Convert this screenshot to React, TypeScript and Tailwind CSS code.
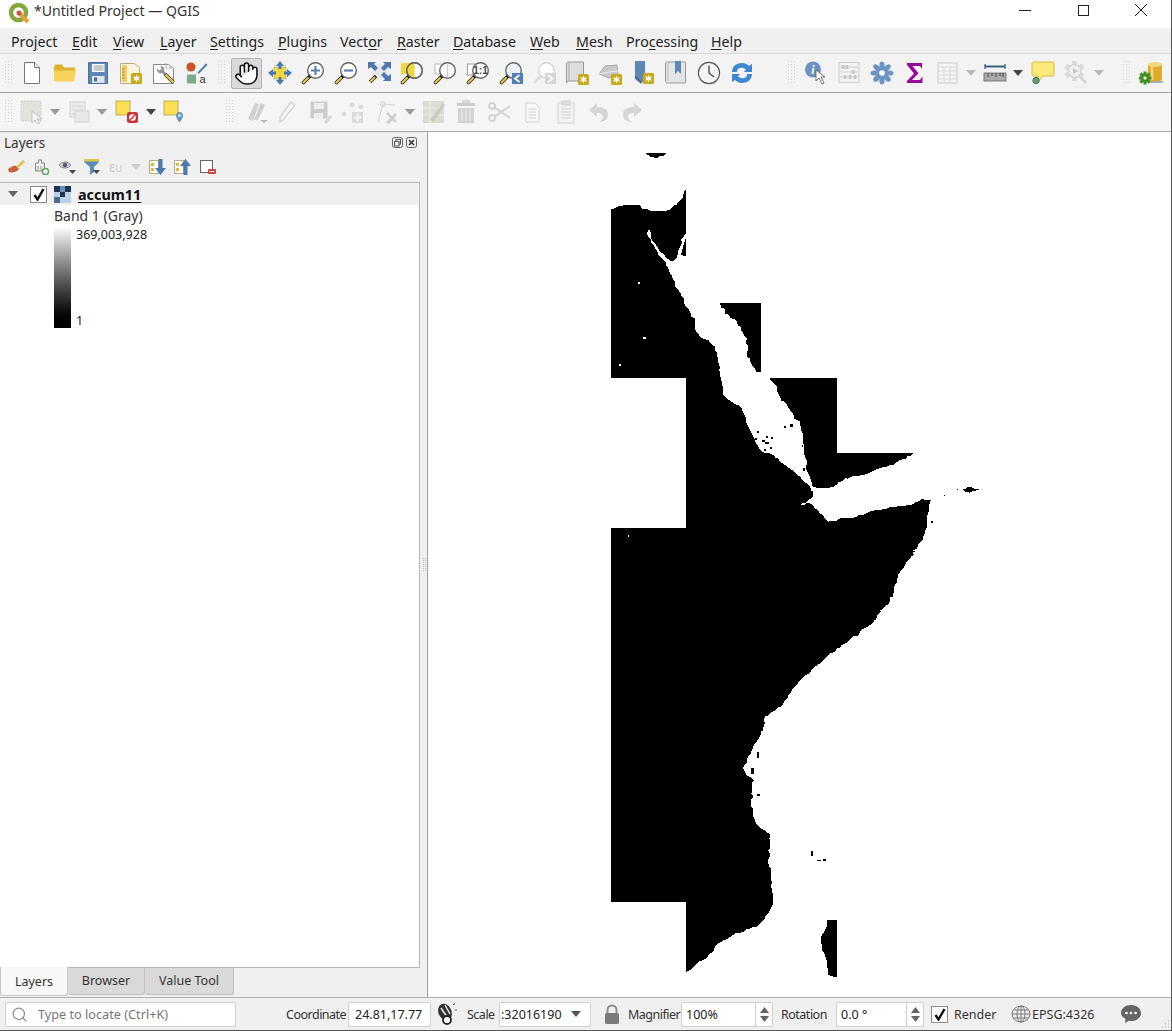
import React from "react";
import { Search, Hand } from "lucide-react";

type P = { children?: React.ReactNode; s?: number };
const I = ({ children, s = 24 }: P) => (
  <svg width={s} height={s} viewBox="0 0 24 24" className="block shrink-0">{children}</svg>
);
const Star = ({ x = 12, y = 12 }: { x?: number; y?: number }) => (
  <g transform={`translate(${x} ${y})`}>
    <rect x="0" y="0" width="11" height="11" rx="1.5" fill="#c9a81a" />
    <path d="M5.5 1.5l1 2.4 2.6-.7-1.6 2.3 1.6 2.3-2.6-.7-1 2.4-1-2.4-2.6.7 1.6-2.3-1.6-2.3 2.6.7z" fill="#fff" />
  </g>
);
const Handle = ({ c = "#e5c84a" }: { c?: string }) => (
  <g>
    <path d="M8.5 15.5L2.5 21.5" stroke="#222" strokeWidth="3.6" strokeLinecap="round" />
    <path d="M7 17L2.5 21.5" stroke={c} strokeWidth="2.2" strokeLinecap="round" />
    <circle cx="9" cy="15" r="1.6" fill="#111" />
  </g>
);
const Lens = ({ fill = "#fff", o = "#666" }: { fill?: string; o?: string }) => (
  <circle cx="14.5" cy="9.5" r="7.8" fill={fill} stroke={o} strokeWidth="1.4" />
);
const Caret = ({ c = "#777" }: { c?: string }) => (
  <svg width="12" height="6" viewBox="0 0 12 6" className="block"><path d="M1 0h10L6 6z" fill={c} /></svg>
);
const Grip = () => (
  <svg width="9" height="24" className="block">
    <defs>
      <pattern id="gripdots" width="3" height="3" patternUnits="userSpaceOnUse">
        <rect width="1" height="1" fill="#d2d2d2" />
      </pattern>
    </defs>
    <rect width="9" height="24" fill="url(#gripdots)" />
  </svg>
);

const NewDoc = () => <I><path d="M4.5 1.5h10l5 5v16h-15z" fill="#fff" stroke="#777" /><path d="M14.5 1.5v5h5" fill="#eee" stroke="#777" /></I>;
const OpenF = () => <I><path d="M1 7l1-3.5h7l2 3h11v4H1z" fill="#e0b12e" /><path d="M1 9.5h22l-2 11H1z" fill="#f7d35c" /></I>;
const Save = () => <I><path d="M2.5 1.5h19v21h-19z" fill="#5f87b4" stroke="#4c6f97" /><rect x="6" y="3" width="12.5" height="8" fill="#fff" /><path d="M7.5 5h10M7.5 7h10M7.5 9h10" stroke="#778" strokeWidth=".8" /><rect x="6" y="15" width="12.5" height="7" fill="#dfe4ea" /><rect x="8" y="16.5" width="3" height="4" fill="#4c6f97" /></I>;
const NewLayout = () => <I><path d="M1.5 2.5h14l5 4v16h-19z" fill="#fbf5dd" stroke="#b9ad80" /><rect x="3" y="4" width="5" height="17" fill="#efd05c" /><path d="M3 8h2.5M3 11h2.5M3 14h2.5M3 17h2.5" stroke="#9a8433" /><Star x={12} y={12} /></I>;
const Manager = () => <I><path d="M1.500 3.500h15l5 4v15h-20z" fill="#fff" stroke="#888" /><path d="M14 2v5h6" fill="none" stroke="#aaa" /><path d="M5 8.500a3.500 3.500 0 005 3.500l2 2 2-2-2-2a3.500 3.500 0 00-3.500-5L9.500 8 7 9.500 5.500 7z" fill="#8f959a" /><path d="M13 13l8.500 8.500" stroke="#333" strokeWidth="3.800" /><path d="M13.500 13.500l8 8" stroke="#e0c850" strokeWidth="2.400" /></I>;
const StyleI = () => <I><circle cx="6" cy="6" r="4.6" fill="#c8562a" /><path d="M12.5 11.5L21 2.5l1.5 1.2-8.5 9z" fill="#4e79a8" /><rect x="2" y="13.5" width="9" height="9" fill="#7bab8f" /><text x="14.5" y="22" fontSize="11" fill="#333" fontFamily="Liberation Sans">a</text></I>;
const PanSel = () => <I><rect x="6" y="6" width="12" height="12" fill="#efd93c" stroke="#999" strokeWidth=".5" /><path d="M12 0l4 5h-2.5v3h-3V5H8zM12 24l4-5h-2.5v-3h-3v3H8zM0 12l5-4v2.5h3v3H5V16zM24 12l-5-4v2.5h-3v3h3V16z" fill="#4d79ac" /></I>;
const ZoomIn = () => <I><Handle /><Lens /><path d="M14.5 5v9M10 9.5h9" stroke="#5a82b0" strokeWidth="2.2" /></I>;
const ZoomOut = () => <I><Handle /><Lens /><path d="M10 9.5h9" stroke="#5a82b0" strokeWidth="2.2" /></I>;
const ZoomFull = () => <I><rect x="5" y="3" width="16" height="15" fill="#e8e8e8" /><path d="M1 1h8L7 3l4 4-3 3-4-4-3 2zM24 1h-8l2 2-4 4 3 3 4-4 3 2zM24 20h-8l2-2-4-4 3-3 4 4 3-2z" fill="#4d79ac" /><path d="M9 15l-6 6" stroke="#222" strokeWidth="3.4" /><path d="M8 16l-5 5" stroke="#e5c84a" strokeWidth="2" /></I>;
const ZoomSel = () => <I><rect x="1" y="2" width="9" height="11" fill="#efd93c" /><Handle /><Lens /><path d="M14.5 2.300a7.200 7.200 0 000 14.400z" fill="#efd93c" /><circle cx="14.5" cy="9.5" r="7.8" fill="none" stroke="#666" strokeWidth="1.4" /></I>;
const ZoomLay = () => <I><rect x="2" y="3" width="7" height="10" fill="#fff" stroke="#aaa" strokeWidth=".8" /><Handle /><Lens /><path d="M14.5 2.300v14.400" stroke="#ccc" strokeWidth="1.4" /></I>;
const Zoom11 = () => <I><rect x="1.5" y="3" width="8" height="11" fill="#fff" stroke="#888" strokeWidth=".8" /><Handle /><Lens /><text x="14.5" y="13" textAnchor="middle" fontSize="10" fontWeight="700" fill="#444" fontFamily="Liberation Sans">1:1</text></I>;
const ZoomLast = () => <I><Handle /><Lens fill="#eef1f5" /><rect x="13" y="12" width="11" height="11" fill="#527fb0" /><path d="M20.5 14l-4.5 3.5 4.5 3.5" fill="none" stroke="#fff" strokeWidth="1.8" /></I>;
const ZoomNext = () => <I><path d="M8.5 15.5L2.5 21.5" stroke="#ddd" strokeWidth="3" /><Lens o="#d5d5d5" /><rect x="13" y="12" width="11" height="11" fill="#d5d5d5" /><path d="M16 14l4.5 3.5L16 21" fill="none" stroke="#fff" strokeWidth="1.8" /></I>;
const NewMap = () => <I><path d="M1.5 3c0-1.5 1-2 2-2h15v19H3.5c-1 0-2 .5-2 2z" fill="#ddd" stroke="#999" /><path d="M4 1v19" stroke="#aaa" /><Star x={13} y={13} /></I>;
const New3d = () => <I><path d="M1 13l6-8 12-1 1 11-9 2z" fill="#c8c8c8" stroke="#aaa" /><path d="M1 13l10-2 9-1" stroke="#eee" fill="none" /><Star x={13} y={13} /></I>;
const NewBook = () => <I><path d="M4 0h10v18l-4 5-6-5z" fill="#5f87b4" /><path d="M4 15l6 6" stroke="#33475f" strokeWidth="1" /><Star x={12} y={12} /></I>;
const Books = () => <I><path d="M1.5 3c0-1.5 1-2 2-2h18v21H3.5c-1 0-2-.5-2-2z" fill="#e4e4e4" stroke="#999" /><path d="M4 1v19" stroke="#bbb" /><path d="M11 0h6v13l-3-3-3 3z" fill="#5f87b4" /></I>;
const Clock = () => <I><circle cx="12" cy="12" r="10.6" fill="#f4f4f4" stroke="#555" strokeWidth="1.1" /><path d="M12 4.5V12l5 4" stroke="#444" strokeWidth="1.3" fill="none" /></I>;
const Refresh = () => <I><path d="M2 11C2 5 7 2 12 2c3 0 5 1 7 3l3-2v8h-8l2-2.5C14 7 12 6.500 10 7c-2.500.5-3 2-3 4z" fill="#3f88cf" /><path d="M22 13c0 6-5 9-10 9-3 0-5-1-7-3l-3 2v-8h8l-2 2.500c2 1.500 4 2 6 1.500 2.500-.5 3-2 3-4z" fill="#3f88cf" /></I>;
const Identify = () => <I><circle cx="9" cy="8.500" r="8" fill="#6d92c0" /><text x="9" y="13" textAnchor="middle" fontSize="12" fontWeight="700" fontStyle="italic" fill="#fff" fontFamily="Liberation Serif">i</text><path d="M12 9l0 11 3-3 3 6 2-1-3-6h4z" fill="#fff" stroke="#555" strokeWidth=".8" /></I>;
const Abacus = () => <I><rect x="2" y="1.500" width="20" height="20" fill="#f2f2f2" stroke="#ccc" /><path d="M3 6h18M3 11h18M3 16h18" stroke="#ccc" /><path d="M6 4v4M10 4v4M16 9v4M8 14v4M13 14v4M18 14v4" stroke="#c5c5c5" strokeWidth="2.600" /></I>;
const Gear = () => <I><g fill="#6e94c4">{[0, 45, 90, 135, 180, 225, 270, 315].map((a) => <ellipse key={a} cx="12" cy="4.500" rx="2.600" ry="4" transform={`rotate(${a} 12 12)`} />)}<circle cx="12" cy="12" r="6.500" /></g><circle cx="12" cy="12" r="2.800" fill="#fff" /></I>;
const Sigma = () => <I><path d="M4 2h15v6l-2-3H9.500l6 7.200-6.500 6.800h8l2.500-3.500v6.500H4v-2l7-7.500L4 4z" fill="#970a96" /></I>;
const TableI = () => <I><rect x="2" y="2" width="19" height="20" fill="#f4f4f4" stroke="#ccc" /><path d="M2 6h19M2 10h19M2 14h19M2 18h19M8 6v16M14 6v16" stroke="#d8d8d8" /></I>;
const Ruler = () => <I><path d="M2 5.500h20" stroke="#3c5f85" strokeWidth="2" /><path d="M2 3v5M22 3v5" stroke="#3c5f85" strokeWidth="1.300" /><rect x="1" y="12" width="22" height="8" fill="#aaa" stroke="#666" strokeWidth=".8" /><path d="M5 12v4M9 12v3M13 12v4M17 12v3M20 12v4" stroke="#444" /></I>;
const TipI = () => <I><path d="M2.500 1h19a1.500 1.500 0 011.500 1.500v11a1.500 1.500 0 01-1.500 1.500H12l-5 6V15H2.500A1.500 1.500 0 011 13.500v-11A1.500 1.500 0 012.500 1z" fill="#fbe97a" stroke="#d5be45" /><circle cx="5" cy="19.500" r="3.200" fill="#6d9c78" stroke="#4b7356" /></I>;
const SearchG = () => <I><g fill="#dcdcdc">{[0, 60, 120, 180, 240, 300].map((a) => <rect key={a} x="8" y="0" width="5" height="20" transform={`rotate(${a} 10.500 10)`} />)}</g><circle cx="10.500" cy="10" r="6.500" fill="#eee" stroke="#ccc" /><path d="M9 7l5 3-5 3z" fill="#c8c8c8" /><path d="M15 15l7 7" stroke="#d5d5d5" strokeWidth="2.500" /></I>;
const Db = () => <I><path d="M9 3.500C9 1 23 1 23 3.500v15c0 2.500-14 2.500-14 0z" fill="#e0ab2c" /><ellipse cx="16" cy="3.500" rx="7" ry="2.300" fill="#f6d77a" /><path d="M13 3v16" stroke="#f4d684" strokeWidth="2.500" /><path d="M9 21h15" stroke="#999" strokeWidth="1.500" /><g fill="#3f8f22">{[0, 45, 90, 135].map((a) => <rect key={a} x="4.500" y="10.500" width="3" height="13" transform={`rotate(${a} 6 17)`} />)}<circle cx="6" cy="17" r="4.500" /></g><circle cx="6" cy="17" r="1.700" fill="#dff0d0" /></I>;

const d = "#d2d2d2";
const SelectD = () => <I><rect x="1" y="1" width="20" height="20" fill="#e2e2dc" stroke="#cfcfc8" strokeDasharray="2 1" /><path d="M12 11v12l3-3 3 4 2-1-3-4h5z" fill="#f6f6f6" stroke="#bbb" strokeWidth=".8" /></I>;
const AttrD = () => <I><rect x="3" y="2" width="15" height="15" fill="#ececec" stroke={d} /><path d="M5 6h11M5 10h11M5 14h11" stroke={d} /><rect x="8" y="11" width="14" height="11" fill="#e8e8e8" stroke={d} /></I>;
const Deselect = () => <I><rect x="1" y="1" width="14" height="14" fill="#fbdf53" stroke="#a89a40" strokeWidth=".7" /><rect x="12" y="12" width="11" height="11" rx="2" fill="#c5373b" /><circle cx="17.500" cy="17.500" r="3.300" fill="#fff" /><path d="M15.300 19.700l4.400-4.400" stroke="#c5373b" strokeWidth="1.500" /></I>;
const SelLoc = () => <I><rect x="1" y="1" width="14" height="14" fill="#fbdf53" stroke="#a89a40" strokeWidth=".7" /><path d="M16.500 12a3.500 3.500 0 013.500 3.500c0 2.500-3.500 7-3.500 7s-3.500-4.500-3.500-7a3.500 3.500 0 013.500-3.500z" fill="#6a93b5" /><circle cx="16.500" cy="15.500" r="1.300" fill="#fff" /></I>;
const PenD = () => <I><path d="M3 19L10 3l4 1-6 17zM9 20L16 3l4 2-7 15z" fill="#d0d0d0" /><path d="M15 20h8l-4 3z" fill="#bbb" /></I>;
const Pen2 = () => <I><path d="M5 22l0-5L16 2l4 3L8 20z" fill="#f6f6f6" stroke={d} strokeWidth="1.300" /></I>;
const SaveD = () => <I><path d="M2.500 1.500h17v17h-17z" fill="#ccc" /><rect x="6" y="3" width="10" height="6" fill="#eee" /><rect x="6" y="13" width="9" height="6" fill="#eee" /><path d="M16 22l6-7 2 2-6 7z" fill="#d5d5d5" /></I>;
const Nodes = () => <I><circle cx="3" cy="14" r="2.300" fill="#d8d8d8" /><circle cx="11" cy="5" r="2.300" fill="#d8d8d8" /><circle cx="20" cy="7" r="2.300" fill="#d8d8d8" /><rect x="11" y="12" width="11" height="11" fill="#ddd" /><path d="M16.500 14v7M13 17.500h7" stroke="#fff" strokeWidth="1.500" /></I>;
const VertexD = () => <I><path d="M3 22L8 4l12 1" fill="none" stroke={d} /><circle cx="8" cy="4" r="2.500" fill="none" stroke={d} /><path d="M11 22l9-9 2 2-8 9z" fill="#cfcfcf" /><path d="M12 13l9 9" stroke="#cfcfcf" strokeWidth="2.500" /></I>;
const EditT = () => <I><rect x="1" y="1" width="21" height="22" fill="#dcdcd4" /><path d="M1 8h21M1 15h21M8 1v22" stroke="#eee" /><path d="M8 20L21 3l2 2-11 17z" fill="#c9c9c0" /></I>;
const Trash = () => <I><rect x="2" y="3" width="18" height="3" fill="#ccc" /><rect x="7" y="0" width="8" height="3" fill="#d8d8d8" /><path d="M3 8h16v15H3z" fill="#d2d2d2" /><path d="M7 10v11M11 10v11M15 10v11" stroke="#eee" /></I>;
const Cut = () => <I><circle cx="4" cy="6" r="3" fill="none" stroke={d} strokeWidth="1.800" /><circle cx="4" cy="18" r="3" fill="none" stroke={d} strokeWidth="1.800" /><path d="M6.500 7.500L22 18M6.500 16.500L22 6" stroke={d} strokeWidth="2" /></I>;
const Copy = () => <I><path d="M5 3h9l4 4v15H5z" fill="#f8f8f8" stroke={d} /><path d="M8 9h7M8 12h7M8 15h7M8 18h7" stroke={d} /></I>;
const Paste = () => <I><rect x="4" y="3" width="16" height="20" fill="#f2f2f2" stroke={d} /><rect x="8" y="1" width="8" height="4" fill="#e0e0e0" stroke={d} /><path d="M7 9h10M7 12h10M7 15h10M7 18h10" stroke={d} /></I>;
const Undo = () => <I><path d="M10 3L2 10l8 7v-4c4 0 6 1 6 4 0 2-2 4-4 5 5 0 9-2 9-8 0-5-5-7-11-7z" fill="#d5d5d5" /></I>;
const Redo = () => <I><path d="M14 3l8 7-8 7v-4c-4 0-6 1-6 4 0 2 2 4 4 5-5 0-9-2-9-8 0-5 5-7 11-7z" fill="#d5d5d5" /></I>;

const Cell = ({ children, w = "w-[33px]" }: { children: React.ReactNode; w?: string }) => (
  <div className={`${w} h-[38px] flex items-center justify-center shrink-0`}>{children}</div>
);
const Mn = ({ a, u, b, w }: { a?: string; u: string; b: string; w: string }) => (
  <span className={`${w} shrink-0 whitespace-nowrap`}>{a}<span className="underline underline-offset-2">{u}</span>{b}</span>
);

const toPts = (list: number[], ox: number, oy: number) => {
  const out: number[][] = [];
  for (let i = 0; i < list.length; i += 2) out.push([ox + list[i] / 3, oy + list[i + 1] / 3]);
  return out;
};
let seed = 7;
const rnd = () => {
  seed = (seed * 9301 + 49297) % 233280;
  return seed / 233280;
};
const snap = (v: number) => Math.round(v / 1.5) * 1.5;
const rough = (list: number[][]) => {
  const out: string[] = [];
  list.forEach((a, i) => {
    const b = list[(i + 1) % list.length];
    out.push(`${a[0]},${a[1]}`);
    const dx = b[0] - a[0];
    const dy = b[1] - a[1];
    if (Math.abs(dx) < 1 || Math.abs(dy) < 1) return;
    const n = Math.floor(Math.hypot(dx, dy) / 3);
    for (let k = 1; k < n; k++) {
      const t = k / n;
      out.push(`${snap(a[0] + dx * t + (rnd() - 0.5) * 2)},${snap(a[1] + dy * t + (rnd() - 0.5) * 2)}`);
    }
  });
  return out.join(" ");
};
const mainA = [33,208,60,198,80,194,120,196,150,212,175,214,200,212,230,195,250,165,257,138,257,280,250,292,240,320,230,352,215,364,200,355,175,325,158,305,150,270,143,268,142,282,155,310,190,360,205,385,220,420,245,470,270,515,285,535,285,565,300,590,325,600,345,620,355,660,365,730,370,765,395,785,425,805,445,860,465,900,480,930,520,945,555,975,600,1010,630,1040,640,1068,600,1095,630,1090,660,1120,685,1145,720,1135,770,1130,820,1112,880,1102,930,1095,965,1075,992,1080,985,1120,975,1180,950,1225,925,1260];
const mainB = [965,0,925,60,895,110,880,160,850,205,810,255,750,300,690,340,640,385,585,440,550,490,495,530,490,570,460,620,445,650,430,685,440,705,462,720,455,745,460,770,452,790,465,840,480,865,510,885,505,960,512,1000,515,1045,520,1070,505,1120,470,1160,400,1185,355,1210,320,1255,290,1270,258,1298,258,1085,33,1085];
const mainPts = rough([
  ...toPts(mainA, 600, 140),
  ...toPts(mainB, 600, 540),
  [611, 528], [686, 528], [686, 378], [611, 378],
]);
const blockB1 = rough(toPts([360,490,483,490,483,697,470,697,460,680,440,650,445,625,435,590,410,545,375,520], 600, 140));
const blockB2 = rough(toPts([510,714,711,714,711,938,950,938,900,960,880,975,830,988,790,1005,735,1015,700,1040,665,1045,640,1040,625,1000,615,950,608,900,600,855,570,810,540,770,525,735], 600, 140));
const top = rough(toPts([138,40,200,40,190,48,170,55,150,50], 600, 140));
const isl = rough(toPts([1088,1048,1105,1040,1140,1048,1110,1058,1095,1056], 600, 140));
const mad = rough(toPts([682,1140,711,1140,711,1310,685,1305,680,1260,665,1220,663,1190,680,1160], 600, 540));
const sliver = toPts([257,295,250,318,243,345,257,348], 600, 140).map((p) => p.join(",")).join(" ");
const specksBlack = [[790,424,3,3],[784,426,2,2],[762,440,3,2],[755,438,2,2],[765,442,4,2],[757,431,2,2],[766,436,2,2],[771,437,2,2],[803,442,2,2],[802,445,1,2],[756,446,2,2],[764,449,2,2],[770,447,2,2],[803,468,2,3],[957,489,1,1],[944,495,1,1],[931,521,2,2],[811,851,2,5],[817,860,4,1],[823,859,3,2],[757,752,2,6],[751,768,3,6],[757,794,3,2]];
const specksWhite = [[638,282,2,2],[643,337,3,2],[619,364,2,2],[628,535,1,2],[746,366,2,2],[935,497,1,1]];

const Lbl = ({ w, t }: { w: string; t: string }) => (
  <div className={`${w} pt-[2px] whitespace-nowrap shrink-0 text-[12.5px] tracking-[-0.5px] text-[#333]`}>{t}</div>
);
const Spin = ({ w, t }: { w: string; t: string }) => (
  <div className={`${w} h-[25px] shrink-0 bg-white border border-[#cfcfcf] rounded-[2px] flex items-center text-[12.5px] text-[#222]`}>
    <span className="flex-1 pl-[4px] pt-[2px]">{t}</span>
    <div className="w-[17px] h-full border-l border-[#cfcfcf] flex flex-col items-center justify-center gap-[3px]">
      <svg width="9" height="6" className="block"><path d="M0 6L4.500 0 9 6z" fill="#666" /></svg>
      <svg width="9" height="6" className="block"><path d="M0 0L4.500 6 9 0z" fill="#666" /></svg>
    </div>
  </div>
);
const CheckBox = ({ size, cls = "" }: { size: string; cls?: string }) => (
  <div className={`${size} shrink-0 bg-white border border-[#8c8c8c] flex items-center justify-center ${cls}`}>
    <svg width="12" height="13" viewBox="0 0 12 13" className="block"><path d="M1.500 7l3 4.500L10.500 1" fill="none" stroke="#111" strokeWidth="2.400" /></svg>
  </div>
);

export default function App() {
  return (
    <div className="w-[1172px] h-[1031px] flex flex-col overflow-hidden bg-[#f0f0f0] border-r border-b border-[#555] font-['Noto_Sans',sans-serif] text-[#222]">
      {/* title */}
      <div className="h-[28px] shrink-0 bg-white flex items-start">
        <svg width="22" height="22" viewBox="0 0 22 22" className="ml-[8px] mt-[2px] block shrink-0">
          <circle cx="10.500" cy="10.500" r="7.500" fill="none" stroke="#83a83c" strokeWidth="4.500" />
          <path d="M11 11l9 9" stroke="#dfa43c" strokeWidth="4" />
          <circle cx="11" cy="11" r="2.500" fill="#c9563a" />
        </svg>
        <div className="ml-[4px] mt-[1px] text-[14.1px] leading-[20px] text-[#333]">*Untitled Project — QGIS</div>
        <div className="ml-auto mr-[1px] flex">
          <div className="w-[58px] h-[20px] flex items-center justify-center"><div className="w-[12px] h-px bg-[#222]" /></div>
          <div className="w-[58px] h-[20px] flex items-center justify-center"><div className="w-[11px] h-[11px] border border-[#222]" /></div>
          <div className="w-[58px] h-[20px] flex items-center justify-center">
            <svg width="12" height="12" className="block"><path d="M0 0l12 12M12 0L0 12" stroke="#222" /></svg>
          </div>
        </div>
      </div>
      {/* menu */}
      <div className="h-[26px] shrink-0 bg-[#f0f0f0] border-b border-[#d8d8d8] pl-[11px] flex items-center text-[14.2px] leading-[20px] pt-[3px]">
        <Mn a="Pro" u="j" b="ect" w="w-[61px]" />
        <Mn u="E" b="dit" w="w-[41px]" />
        <Mn u="V" b="iew" w="w-[47px]" />
        <Mn u="L" b="ayer" w="w-[50px]" />
        <Mn u="S" b="ettings" w="w-[68px]" />
        <Mn u="P" b="lugins" w="w-[62px]" />
        <Mn a="Vect" u="o" b="r" w="w-[57px]" />
        <Mn u="R" b="aster" w="w-[56px]" />
        <Mn u="D" b="atabase" w="w-[77px]" />
        <Mn u="W" b="eb" w="w-[46px]" />
        <Mn u="M" b="esh" w="w-[50px]" />
        <Mn a="Pro" u="c" b="essing" w="w-[85px]" />
        <Mn u="H" b="elp" w="w-[40px]" />
      </div>
      {/* toolbar 1 */}
      <div className="h-[39px] shrink-0 bg-[#f3f3f3] border-b border-[#a9a9a9] flex items-center">
        <div className="w-[15px] pl-[5px] shrink-0"><Grip /></div>
        <Cell><NewDoc /></Cell><Cell><OpenF /></Cell><Cell><Save /></Cell><Cell><NewLayout /></Cell><Cell><Manager /></Cell><Cell><StyleI /></Cell>
        <div className="w-[17px] shrink-0 pl-[5px]"><Grip /></div>
        <Cell>
          <div className="w-[31px] h-[31px] bg-[#d9d9d9] border border-[#b4b4b4] rounded-[2px] flex items-center justify-center">
            <Hand size={25} fill="#fff" stroke="#111" strokeWidth={1.5} />
          </div>
        </Cell>
        <Cell><PanSel /></Cell><Cell><ZoomIn /></Cell><Cell><ZoomOut /></Cell><Cell><ZoomFull /></Cell><Cell><ZoomSel /></Cell><Cell><ZoomLay /></Cell><Cell><Zoom11 /></Cell><Cell><ZoomLast /></Cell><Cell><ZoomNext /></Cell><Cell><NewMap /></Cell><Cell><New3d /></Cell><Cell><NewBook /></Cell><Cell><Books /></Cell><Cell><Clock /></Cell><Cell><Refresh /></Cell>
        <div className="w-[41px] shrink-0 flex justify-end pr-[2px]"><Grip /></div>
        <Cell><Identify /></Cell><Cell><Abacus /></Cell><Cell><Gear /></Cell><Cell><Sigma /></Cell><Cell><TableI /></Cell>
        <Cell w="w-[14px]"><Caret c="#bbb" /></Cell>
        <Cell><Ruler /></Cell>
        <Cell w="w-[14px]"><Caret c="#444" /></Cell>
        <div className="w-[1px] shrink-0" />
        <Cell><TipI /></Cell>
        <Cell><SearchG /></Cell>
        <Cell w="w-[14px]"><Caret c="#bbb" /></Cell>
        <div className="w-[28px] shrink-0 flex justify-end pr-[2px]"><Grip /></div>
        <Cell><Db /></Cell>
      </div>
      {/* toolbar 2 */}
      <div className="h-[39px] shrink-0 bg-[#f5f5f5] border-b border-[#a9a9a9] flex items-center">
        <div className="w-[15px] pl-[5px] shrink-0"><Grip /></div>
        <Cell><SelectD /></Cell>
        <Cell w="w-[14px]"><Caret c="#999" /></Cell>
        <Cell><AttrD /></Cell>
        <Cell w="w-[14px]"><Caret c="#999" /></Cell>
        <div className="w-[1px] shrink-0" />
        <Cell><Deselect /></Cell>
        <div className="w-[1px] shrink-0" />
        <Cell w="w-[14px]"><Caret c="#444" /></Cell>
        <Cell><SelLoc /></Cell>
        <div className="w-[49px] shrink-0 flex justify-end pr-[5px]"><Grip /></div>
        <Cell><PenD /></Cell>
        <div className="-ml-[3px]"><Cell><Pen2 /></Cell></div>
        <Cell><SaveD /></Cell><Cell><Nodes /></Cell>
        <div className="ml-[1px]"><Cell><VertexD /></Cell></div>
        <Cell w="w-[14px]"><Caret c="#999" /></Cell>
        <Cell><EditT /></Cell><Cell><Trash /></Cell><Cell><Cut /></Cell><Cell><Copy /></Cell><Cell><Paste /></Cell><Cell><Undo /></Cell><Cell><Redo /></Cell>
      </div>
      {/* main */}
      <div className="flex-1 min-h-0 flex">
        <div className="w-[420px] shrink-0 flex flex-col">
          <div className="h-[21px] shrink-0 flex items-center pl-[4px] pr-[2px]">
            <span className="text-[13.5px] text-[#333] leading-[20px]">Layers</span>
            <div className="ml-auto flex gap-[3px] mr-[1px]">
              <svg width="11" height="11" className="block"><rect x=".5" y=".5" width="10" height="10" rx="2" fill="none" stroke="#666" /><rect x="4" y="2.500" width="4.500" height="4.500" fill="none" stroke="#555" /><rect x="2.500" y="4.500" width="4.500" height="4.500" fill="#eee" stroke="#555" /></svg>
              <svg width="11" height="11" className="block"><rect x=".5" y=".5" width="10" height="10" rx="2" fill="none" stroke="#666" /><path d="M3 3l5 5M8 3L3 8" stroke="#333" strokeWidth="1.500" /></svg>
            </div>
          </div>
          <div className="h-[28px] shrink-0 flex items-center">
            <div className="w-[15px] ml-[7px] shrink-0"><svg width="18" height="16" viewBox="0 0 18 16" className="block"><path d="M9 8l7-7 2 2-7 6z" fill="#dcc24b" /><path d="M1 10c3-2 6-4 8-3l3 3c-2 3-7 4-10 3z" fill="#c9603a" /></svg></div>
            <div className="ml-[11px] w-[16px] shrink-0"><svg width="16" height="16" viewBox="0 0 16 16" className="block"><path d="M5.500 1h3v3h3v8h-9V4h3z" fill="#eee" stroke="#888" /><path d="M5 7v5M8 7v5" stroke="#999" /><circle cx="12.500" cy="12.500" r="3" fill="#fff" stroke="#5fa05f" strokeWidth="1.500" /></svg></div>
            <div className="ml-[9px] w-[18px] shrink-0"><svg width="18" height="16" viewBox="0 0 18 16" className="block"><path d="M1 6c3-4 9-4 12 0-3 4-9 4-12 0z" fill="#d0d0d0" stroke="#888" /><circle cx="7" cy="6" r="2.200" fill="#4c5e70" /><path d="M11 11h7l-3.500 4z" fill="#444" /></svg></div>
            <div className="ml-[7px] w-[18px] shrink-0"><svg width="18" height="18" viewBox="0 0 18 18" className="block"><path d="M1 1h15v3L11 9v5l-4 3V9L1 4z" fill="#5f8bb7" /><rect x="1" y="1" width="15" height="2.500" fill="#dcc64a" /><path d="M10 12h7l-3.500 4z" fill="#444" /></svg></div>
            <div className="ml-[8px] w-[18px] shrink-0 text-[#ccc] text-[14px] leading-none">ε<span className="text-[9px]">U</span></div>
            <div className="ml-[3px] w-[12px] shrink-0"><Caret c="#ccc" /></div>
            <div className="ml-[7px] w-[17px] shrink-0"><svg width="17" height="16" viewBox="0 0 17 16" className="block"><rect x=".5" y="1.500" width="9" height="13" fill="#fff" stroke="#b9ad80" /><rect x="2" y="4" width="3" height="3" fill="#e4b93c" /><rect x="2" y="9" width="3" height="3" fill="#e4b93c" /><path d="M9.500 0h4v9H17l-5.500 7L6 9h3.500z" fill="#4d79ac" /></svg></div>
            <div className="ml-[8px] w-[17px] shrink-0"><svg width="17" height="16" viewBox="0 0 17 16" className="block"><rect x=".5" y="1.500" width="9" height="13" fill="#fff" stroke="#b9ad80" /><rect x="2" y="4" width="3" height="3" fill="#e4b93c" /><rect x="2" y="9" width="3" height="3" fill="#e4b93c" /><path d="M9.500 16h4V7H17L11.500 0 6 7h3.500z" fill="#4d79ac" /></svg></div>
            <div className="ml-[8px] w-[17px] shrink-0"><svg width="17" height="16" viewBox="0 0 17 16" className="block"><rect x="1.500" y="1.500" width="12" height="12" fill="#fff" stroke="#666" /><rect x="9" y="10" width="8" height="5" rx="1" fill="#cc4444" /><rect x="10.500" y="12" width="5" height="1" fill="#fff" /></svg></div>
          </div>
          <div className="flex-1 min-h-0 bg-white border border-[#b8b8b8] border-l-0 ml-0 mt-[1px] flex flex-col">
            <div className="h-[22px] shrink-0 bg-[#f0f0f0] flex items-center">
              <div className="ml-[8px] w-[10px]"><svg width="10" height="6" className="block"><path d="M0 0h10L5 6z" fill="#666" /></svg></div>
              <CheckBox size="w-[17px] h-[17px]" cls="ml-[12px]" />
              <div className="ml-[7px] w-[17px] shrink-0">
                <svg width="17" height="17" viewBox="0 0 3 3" className="block" shapeRendering="crispEdges">
                  <rect width="3" height="3" fill="#bcd0e6" />
                  <rect x="0" y="0" width="1" height="1" fill="#1c3550" /><rect x="2" y="0" width="1" height="1" fill="#1c3550" /><rect x="1" y="1" width="1" height="1" fill="#1c3550" /><rect x="0" y="2" width="1" height="1" fill="#4a6b8f" /><rect x="1" y="0" width="1" height="1" fill="#6f90b3" />
                </svg>
              </div>
              <span className="ml-[7px] pt-[1px] text-[14.4px] font-bold underline underline-offset-2 text-[#111]">accum11</span>
            </div>
            <div className="ml-[54px] mt-[1px] text-[14px] leading-[20px] text-[#333]">Band 1 (Gray)</div>
            <div className="ml-[54px] flex h-[101px] mt-[1px]">
              <div className="w-[17px] h-full bg-gradient-to-b from-white to-black" />
              <div className="ml-[5px] pt-[1px] flex flex-col justify-between text-[12.5px] leading-[14px] text-[#222]">
                <span>369,003,928</span>
                <span>1</span>
              </div>
            </div>
          </div>
          <div className="h-[29px] shrink-0 flex items-start text-[12.5px] text-[#333]">
            <div className="w-[68px] h-[29px] -mt-px pt-[2px] bg-[#f8f8f8] border border-[#c8c8c8] border-t-0 rounded-b-[3px] flex items-center justify-center">Layers</div>
            <div className="w-[77px] h-[27px] pt-[1px] bg-[#d9d9d9] border-r border-b border-[#c0c0c0] rounded-b-[3px] flex items-center justify-center">Browser</div>
            <div className="w-[89px] h-[27px] pt-[1px] bg-[#d9d9d9] border-r border-b border-[#c0c0c0] rounded-b-[3px] flex items-center justify-center">Value Tool</div>
          </div>
        </div>
        <div className="w-[7px] shrink-0 flex items-center justify-end pr-[1px]">
          <svg width="3" height="14" className="block"><path d="M.5 0v14M2.500 0v14" stroke="#bbb" strokeDasharray="1 1" /></svg>
        </div>
        <div className="flex-1 min-w-0 bg-white border-l border-[#a0a0a0]">
          <svg viewBox="428 132 743 866" className="block w-[743px] h-[866px]" shapeRendering="crispEdges">
            <polygon points={mainPts} fill="#000" />
            <polygon points={blockB1} fill="#000" />
            <polygon points={blockB2} fill="#000" />
            <polygon points={top} fill="#000" />
            <polygon points={isl} fill="#000" />
            <polygon points={mad} fill="#000" />
            <polygon points={sliver} fill="#000" />
            {specksBlack.map((r, i) => <rect key={i} x={r[0]} y={r[1]} width={r[2]} height={r[3]} fill="#000" />)}
            {specksWhite.map((r, i) => <rect key={i} x={r[0]} y={r[1]} width={r[2]} height={r[3]} fill="#fff" />)}
          </svg>
        </div>
      </div>
      {/* status */}
      <div className="h-[33px] shrink-0 bg-[#f0f0f0] border-t border-[#b0b0b0] flex items-center">
        <div className="ml-[5px] w-[231px] h-[25px] shrink-0 bg-white border border-[#cfcfcf] rounded-[2px] flex items-center">
          <Search size={17} stroke="#888" strokeWidth={1.6} className="ml-[5px] shrink-0" />
          <span className="ml-[10px] pt-[2px] text-[12.7px] text-[#777]">Type to locate (Ctrl+K)</span>
        </div>
        <Lbl w="w-[60px] ml-[50px]" t="Coordinate" />
        <div className="ml-[2px] w-[83px] h-[25px] pt-[2px] shrink-0 bg-white border border-[#cfcfcf] rounded-[2px] flex items-center pl-[6px] text-[12.5px]">24.81,17.77</div>
        <svg width="22" height="24" viewBox="0 0 22 24" className="ml-[4px] block shrink-0">
          <ellipse cx="10" cy="10" rx="6.500" ry="8.500" fill="#333" transform="rotate(-25 10 10)" />
          <path d="M6 6l6 9M10 3l5 9" stroke="#eee" strokeWidth="1.500" />
          <circle cx="12" cy="18" r="4" fill="#fff" stroke="#222" strokeWidth="1.800" />
          <path d="M18 3l2-1.500M20 8h2" stroke="#555" />
        </svg>
        <Lbl w="w-[30px] ml-[10px]" t="Scale" />
        <div className="ml-[2px] w-[92px] h-[25px] shrink-0 bg-white border border-[#cfcfcf] rounded-[2px] flex items-center text-[12.5px]">
          <span className="flex-1 pl-[1px] pt-[2px]">:32016190</span>
          <div className="pr-[8px]"><Caret c="#555" /></div>
        </div>
        <svg width="16" height="20" viewBox="0 0 16 20" className="ml-[13px] block shrink-0"><path d="M3.500 9V6a4.500 4.500 0 019 0v3" fill="none" stroke="#8a8a8a" strokeWidth="2" /><rect x="1" y="9" width="14" height="11" rx="1.500" fill="#7a7a7a" /></svg>
        <Lbl w="w-[53px] ml-[8px]" t="Magnifier" />
        <Spin w="w-[92px]" t="100%" />
        <Lbl w="w-[47px] ml-[8px]" t="Rotation" />
        <div className="ml-[8px]"><Spin w="w-[88px]" t="0.0 °" /></div>
        <CheckBox size="w-[17px] h-[17px]" cls="ml-[7px]" />
        <span className="ml-[6px] pt-[2px] text-[12.5px] text-[#333] w-[48px] shrink-0">Render</span>
        <svg width="20" height="18" viewBox="0 0 20 18" className="ml-[9px] block shrink-0" fill="none" stroke="#777"><ellipse cx="10" cy="9" rx="9" ry="8" /><ellipse cx="10" cy="9" rx="4" ry="8" /><path d="M1 9h18M2.500 5h15M2.500 13h15M10 1v16" /></svg>
        <span className="ml-[1px] pt-[2px] text-[12.5px] text-[#333] w-[78px] shrink-0">EPSG:4326</span>
        <svg width="22" height="22" viewBox="0 0 22 22" className="ml-[10px] block shrink-0"><path d="M11 2c5.500 0 10 3.500 10 8s-4 8-9 8c-1 0-2 0-3-.3L5 20l.5-4C3 14.500 1 12.500 1 10c0-4.500 4.500-8 10-8z" fill="#666" /><circle cx="6.500" cy="10" r="1.300" fill="#fff" /><circle cx="11" cy="10" r="1.300" fill="#fff" /><circle cx="15.500" cy="10" r="1.300" fill="#fff" /></svg>
        <svg width="9" height="9" className="ml-auto mr-[1px] self-end mb-[1px] block shrink-0">
          <path d="M7 1h1M4 4h1M7 4h1M1 7h1M4 7h1M7 7h1" stroke="#aaa" />
        </svg>
      </div>
    </div>
  );
}
